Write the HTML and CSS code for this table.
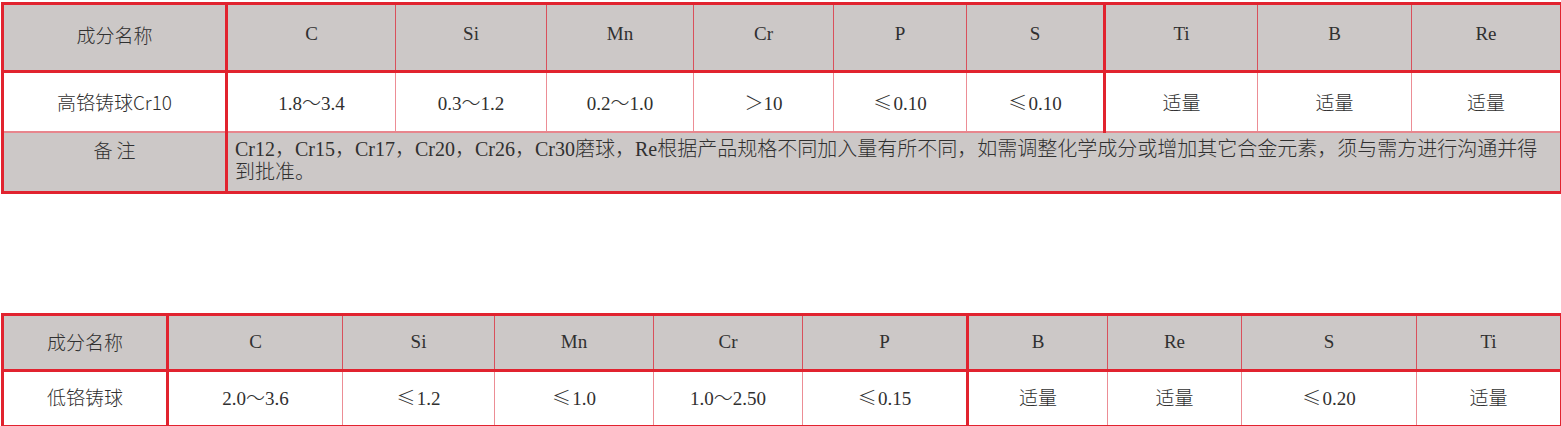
FILE: index.html
```html
<!DOCTYPE html>
<html lang="zh">
<head>
<meta charset="utf-8">
<title>成分表</title>
<link rel="stylesheet" href="styles.css">
</head>
<body>
<div class="page">
  <table class="spec spec-high">
    <colgroup>
      <col class="c1"><col class="c2"><col class="c3"><col class="c4"><col class="c5">
      <col class="c6"><col class="c7"><col class="c8"><col class="c9"><col class="c10">
    </colgroup>
    <tr class="head">
      <td class="name">成分名称</td>
      <td class="thick">C</td>
      <td>Si</td>
      <td>Mn</td>
      <td>Cr</td>
      <td>P</td>
      <td>S</td>
      <td class="thick">Ti</td>
      <td>B</td>
      <td>Re</td>
    </tr>
    <tr class="data">
      <td class="name">高铬铸球Cr10</td>
      <td class="thick">1.8～3.4</td>
      <td>0.3～1.2</td>
      <td>0.2～1.0</td>
      <td>＞10</td>
      <td><span class="sym">≤</span>0.10</td>
      <td><span class="sym">≤</span>0.10</td>
      <td class="thick name">适量</td>
      <td class="name">适量</td>
      <td class="name">适量</td>
    </tr>
    <tr class="note">
      <td class="name note-label">备 注</td>
      <td class="thick note-text" colspan="9">Cr12，Cr15，Cr17，Cr20，Cr26，Cr30磨球，Re根据产品规格不同加入量有所不同，如需调整化学成分或增加其它合金元素，须与需方进行沟通并得到批准。</td>
    </tr>
  </table>

  <table class="spec spec-low">
    <colgroup>
      <col class="d1"><col class="d2"><col class="d3"><col class="d4"><col class="d5">
      <col class="d6"><col class="d7"><col class="d8"><col class="d9"><col class="d10">
    </colgroup>
    <tr class="head head-low">
      <td class="name">成分名称</td>
      <td class="thick">C</td>
      <td>Si</td>
      <td>Mn</td>
      <td>Cr</td>
      <td>P</td>
      <td class="thick">B</td>
      <td>Re</td>
      <td>S</td>
      <td>Ti</td>
    </tr>
    <tr class="data data-low">
      <td class="name">低铬铸球</td>
      <td class="thick">2.0～3.6</td>
      <td><span class="sym">≤</span>1.2</td>
      <td><span class="sym">≤</span>1.0</td>
      <td>1.0～2.50</td>
      <td><span class="sym">≤</span>0.15</td>
      <td class="thick name">适量</td>
      <td class="name">适量</td>
      <td><span class="sym">≤</span>0.20</td>
      <td class="name">适量</td>
    </tr>
  </table>
</div>
</body>
</html>
```

FILE: styles.css
```css
html, body {
  margin: 0;
  padding: 0;
  background: #ffffff;
}

.page {
  padding: 2px 0 0 1px;
  width: 1560px;
}

.spec {
  width: 1559px;
  table-layout: fixed;
  border-collapse: collapse;
  border: 3px solid #e1232f;
  font-family: "Liberation Serif", "Noto Sans CJK SC", serif;
  font-size: 19px;
  font-weight: 300;
  color: #303030;
}

.spec-low {
  margin-top: 119px;
}

.spec td {
  border: 1px solid #d9505b;
  text-align: center;
  vertical-align: middle;
  padding: 0;
  overflow: hidden;
}

.spec td.thick {
  border-left: 3px solid #e1232f;
}

.name {
  font-family: "Noto Sans CJK SC", sans-serif;
}

.sym {
  font-family: "Noto Sans CJK SC", sans-serif;
  margin-right: 1px;
}

.head td {
  background: #ccc8c7;
  height: 58px;
  border-bottom: 3px solid #e1232f;
  padding-bottom: 7px;
}

.head-low td {
  height: 51px;
  padding-bottom: 2px;
}

.data td {
  background: #ffffff;
  height: 56px;
  border-color: #ec8d95;
  border-bottom: 2px solid #e8868d;
  padding-bottom: 2px;
}

.data td.thick {
  border-left: 3px solid #e1232f;
}

.data-low td {
  height: 49px;
  border-bottom: 3px solid #e1232f;
  padding-bottom: 4px;
}

.note td {
  background: #ccc8c7;
  height: 53px;
  vertical-align: top;
  line-height: 23px;
  padding-top: 5px;
}

.note .note-text {
  text-align: left;
  padding: 5px 10px 0 7px;
  font-size: 20px;
}

/* top table column widths */
.c1 { width: 224px; }
.c2 { width: 169px; }
.c3 { width: 151px; }
.c4 { width: 147px; }
.c5 { width: 140px; }
.c6 { width: 133px; }
.c7 { width: 138px; }
.c8 { width: 153px; }
.c9 { width: 154px; }
.c10 { width: 150px; }

/* bottom table column widths */
.d1 { width: 165px; }
.d2 { width: 175px; }
.d3 { width: 152px; }
.d4 { width: 159px; }
.d5 { width: 149px; }
.d6 { width: 165px; }
.d7 { width: 140px; }
.d8 { width: 134px; }
.d9 { width: 175px; }
.d10 { width: 145px; }
```
